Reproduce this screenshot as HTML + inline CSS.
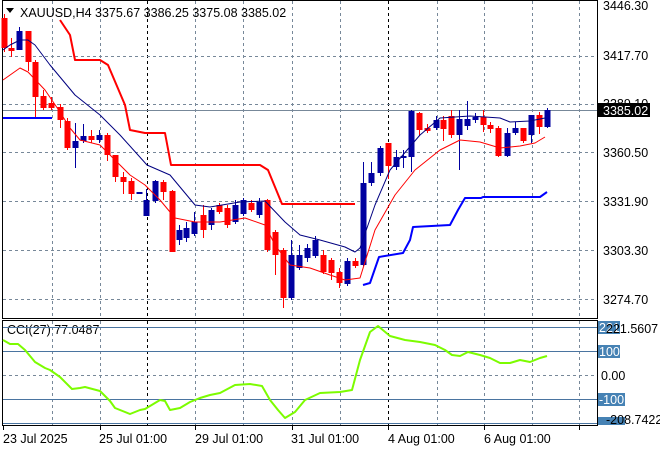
<!DOCTYPE html>
<html><head><meta charset="utf-8"><style>
body{margin:0;width:660px;height:450px;background:#fff;overflow:hidden;font-family:"Liberation Sans",sans-serif;}
svg{position:absolute;left:0;top:0}
text{font-family:"Liberation Sans",sans-serif;font-size:12.5px;fill:#000}
text.w{fill:#fff}
</style></head><body>
<svg width="660" height="450" viewBox="0 0 660 450" id="s">
<g stroke="#778899" stroke-width="1" stroke-dasharray="3,3" fill="none" id="grid"></g>
<line x1="3" y1="110.5" x2="597" y2="110.5" stroke="#778899"/>
<rect x="2.5" y="0.5" width="595" height="318" fill="none" stroke="#000"/>
<rect x="2.5" y="320.5" width="595" height="105" fill="none" stroke="#000"/>
<g id="cs"></g>
<text x="20" y="17">XAUUSD,H4  3375.67 3386.25 3375.08 3385.02</text>
<path d="M6 8 L14 8 L10 13 Z" fill="#000"/>
<text x="7" y="334">CCI(27) 77.0487</text>
</svg>
<script>
var s=document.getElementById('s'),NS='http://www.w3.org/2000/svg';
function el(t,a,p){var e=document.createElementNS(NS,t);for(var k in a)e.setAttribute(k,a[k]);(p||s).appendChild(e);return e;}
var g=document.getElementById('grid');
[52,100,195,243,292,340,437,484,532,579].forEach(function(x){el('line',{x1:x+.5,y1:1,x2:x+.5,y2:318},g);el('line',{x1:x+.5,y1:321,x2:x+.5,y2:425},g);});
[147,388].forEach(function(x){el('line',{x1:x+.5,y1:1,x2:x+.5,y2:318,stroke:'#000'},g);el('line',{x1:x+.5,y1:321,x2:x+.5,y2:425,stroke:'#000'},g);});
[56,104,152,201,250,299].forEach(function(y){el('line',{x1:3,y1:y+.5,x2:597,y2:y+.5},g);});
el('line',{x1:3,y1:375.5,x2:597,y2:375.5},g);
[327,351,399,423].forEach(function(y){el('line',{x1:3,y1:y+.5,x2:597,y2:y+.5,stroke:'#4a74a0'});});
var C=[[4,18,48,14,52,'r'],[11,48,51,38,57,'r'],[19,31,50,27,50,'b'],[28,31,62,31,71,'r'],[35,62,97,60,117,'r'],[43,96,108,90,110,'r'],[51,103,108,97,110,'r'],[60,107,120,104,128,'r'],[67,121,148,118,150,'r'],[75,141,148,123,168,'b'],[83,136,141,124,143,'b'],[91,136,140,130,143,'r'],[99,135,140,130,143,'b'],[107,135,155,133,161,'r'],[115,155,177,155,182,'r'],[123,177,182,172,194,'r'],[131,181,194,178,200,'r'],[139,192,194,192,194,'b'],[146,200,216,189,216,'b'],[155,181,201,180,203,'b'],[163,182,192,180,200,'r'],[172,191,252,190,252,'r'],[179,230,240,225,245,'b'],[186,228,238,222,242,'b'],[194,222,234,212,236,'b'],[203,215,230,205,238,'r'],[211,210,225,208,230,'b'],[219,205,212,203,214,'r'],[227,208,225,205,228,'r'],[235,205,222,200,224,'b'],[243,200,214,198,216,'b'],[251,203,210,200,212,'r'],[259,202,215,198,218,'b'],[267,200,250,199,252,'r'],[275,232,255,230,275,'r'],[283,250,298,248,308,'r'],[291,255,298,240,300,'b'],[299,255,268,245,270,'b'],[307,248,258,244,262,'b'],[315,240,256,236,258,'b'],[323,255,272,250,274,'r'],[331,260,273,258,280,'r'],[339,272,283,268,288,'r'],[347,261,284,258,286,'b'],[355,261,266,258,268,'r'],[363,183,265,162,266,'b'],[371,173,183,162,186,'b'],[380,148,173,146,176,'b'],[388,143,166,143,179,'r'],[396,157,167,150,170,'b'],[403,156,158,150,168,'b'],[411,111,157,110,172,'b'],[419,113,130,112,136,'r'],[427,128,131,124,133,'r'],[436,120,128,116,130,'b'],[443,120,129,116,141,'r'],[451,116,135,110,138,'r'],[459,119,135,110,170,'b'],[467,119,126,101,130,'b'],[475,117,120,113,123,'b'],[483,117,125,110,132,'r'],[490,125,129,122,133,'r'],[498,128,156,126,157,'r'],[507,133,156,128,157,'b'],[515,128,133,122,135,'b'],[523,128,141,128,143,'r'],[531,115,135,115,143,'b'],[539,115,127,112,134,'r'],[547,110,127,108,128,'b']];
function pl(pts,col,w){el('polyline',{points:pts,fill:'none',stroke:col,'stroke-width':w,'stroke-linejoin':'round'});}
pl('3,50 10,45 20,40 28,40 35,45 50,65 75,95 100,115 120,135 147,165 170,175 195,205 210,207 240,202 265,201 285,222 300,235 320,240 345,247 355,252 360,248 375,205 390,170 420,135 440,118 470,116 500,118 510,122 530,121 545,118','#000080',1);
pl('3,80 20,68 28,72 45,90 60,112 70,128 80,140 100,145 115,160 130,175 145,185 160,200 175,218 195,222 220,222 245,218 265,225 275,245 290,265 310,268 330,275 345,280 360,278 375,230 395,195 415,170 440,150 460,140 480,142 500,148 520,146 535,143 545,137','#ff0000',1);
pl('60,20 70,35 75,60 100,60 108,65 125,105 130,130 145,133 165,133 171,165 260,165 268,170 282,204 355,204','#ff0000',2);
pl('3,118 52,118','#0000ff',2);
pl('363,285 370,283 379,257 403,253 410,240 413,227 450,225 458,210 465,198 481,198 483,197 540,197 547,192','#0000ff',2);
var cg=document.getElementById('cs');
C.forEach(function(c){var col=c[5]=='r'?'#ff0000':'#0000a0';
el('line',{x1:c[0]+.5,y1:c[3],x2:c[0]+.5,y2:c[4],stroke:col},cg);
el('rect',{x:c[0]-2.5,y:c[1],width:6,height:Math.max(1,c[2]-c[1]),fill:col},cg);});
pl('3,340 10,344 18,344 25,350 35,362 45,368 50,370 60,377 72,389 80,388 85,387 100,391 110,401 115,408 130,414 140,410 145,409 160,400 165,401 170,410 180,408 190,402 200,398 210,395 220,393 235,385 250,384 262,386 270,400 278,410 285,418 295,412 305,400 320,393 340,392 352,390 360,360 370,332 378,326 390,336 405,340 420,342 435,345 445,350 452,355 460,356 468,352 480,355 490,358 500,363 510,363 520,360 530,362 540,358 547,356','#7cfc00',2);
</script>
<svg width="660" height="450" style="position:absolute;left:0;top:0">
<text x="603" y="10">3446.30</text>
<text x="603" y="60">3417.70</text>
<text x="603" y="108">3389.10</text>
<rect x="598" y="103" width="52" height="14" fill="#000"/>
<text x="603" y="115" class="w">3385.02</text>
<text x="603" y="157">3360.50</text>
<text x="603" y="206">3331.90</text>
<text x="603" y="255">3303.30</text>
<text x="603" y="304">3274.70</text>
<rect x="598" y="321" width="22" height="13" fill="#4682b4"/>
<text x="599" y="332" class="w">221</text>
<text x="606" y="333">221.5607</text>
<rect x="598" y="345" width="22" height="13" fill="#4682b4"/>
<text x="599" y="356" class="w">100</text>
<text x="601" y="380">0.00</text>
<rect x="598" y="393" width="27" height="13" fill="#4682b4"/>
<text x="599" y="404" class="w">-100</text>
<rect x="598" y="417" width="27" height="8" fill="#4682b4"/>
<text x="606" y="424">-208.7422</text>
<text x="3" y="443">23 Jul 2025</text>
<text x="99" y="443">25 Jul 01:00</text>
<text x="195" y="443">29 Jul 01:00</text>
<text x="291" y="443">31 Jul 01:00</text>
<text x="388" y="443">4 Aug 01:00</text>
<text x="484" y="443">6 Aug 01:00</text>
<g stroke="#000"><line x1="3.5" y1="426" x2="3.5" y2="430"/><line x1="100.5" y1="426" x2="100.5" y2="430"/><line x1="195.5" y1="426" x2="195.5" y2="430"/><line x1="292.5" y1="426" x2="292.5" y2="430"/><line x1="388.5" y1="426" x2="388.5" y2="430"/><line x1="484.5" y1="426" x2="484.5" y2="430"/><line x1="579.5" y1="426" x2="579.5" y2="430"/></g>
</svg>
</body></html>
